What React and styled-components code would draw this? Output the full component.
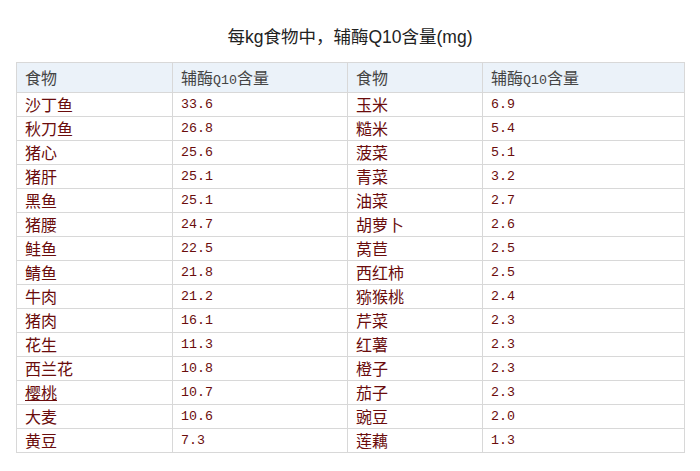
import React from "react";
import styled, { createGlobalStyle } from "styled-components";

const Global = createGlobalStyle`
  html, body { margin: 0; padding: 0; background: #fff; }
  body { font-family: "Noto Sans CJK SC", "Noto Sans", sans-serif; }
`;

const Page = styled.div`
  width: 700px;
  padding: 25px 16px 0 16px;
  box-sizing: border-box;
`;

const Title = styled.h1`
  margin: 0 0 13px 0;
  height: 24px;
  line-height: 24px;
  text-align: center;
  font-size: 17.5px;
  font-weight: normal;
  color: #222;
  font-family: "Liberation Sans", "Noto Sans CJK SC", sans-serif;
`;

const Table = styled.table`
  width: 668px;
  border-collapse: collapse;
  table-layout: fixed;
`;

const HeadCell = styled.th`
  height: 29px;
  padding: 0 0 0 8px;
  text-align: left;
  font-weight: normal;
  font-size: 16px;
  color: #444;
  background: #ebf2f9;
  border: 1px solid #d8d8d8;
  font-family: "Noto Sans CJK SC", sans-serif;
  line-height: 29px;
  white-space: nowrap;
  overflow: hidden;
`;

const Cell = styled.td`
  height: 23px;
  padding: 0 0 0 8px;
  border: 1px solid #d8d8d8;
  color: #6a0c0c;
  line-height: 23px;
  white-space: nowrap;
  overflow: hidden;
  font-size: ${(p) => (p.$num ? "13.3px" : "16px")};
  font-family: ${(p) =>
    p.$num
      ? `"Liberation Mono", "DejaVu Sans Mono", monospace`
      : `"Noto Sans CJK SC", sans-serif`};
`;

const Mono = styled.span`
  font-family: "Liberation Mono", monospace;
  font-size: 13.3px;
  line-height: 1;
`;

const Link = styled.a`
  color: #6a0c0c;
  text-decoration: underline;
`;

const rows = [
  ["沙丁鱼", "33.6", "玉米", "6.9"],
  ["秋刀鱼", "26.8", "糙米", "5.4"],
  ["猪心", "25.6", "菠菜", "5.1"],
  ["猪肝", "25.1", "青菜", "3.2"],
  ["黑鱼", "25.1", "油菜", "2.7"],
  ["猪腰", "24.7", "胡萝卜", "2.6"],
  ["鲑鱼", "22.5", "莴苣", "2.5"],
  ["鲭鱼", "21.8", "西红柿", "2.5"],
  ["牛肉", "21.2", "猕猴桃", "2.4"],
  ["猪肉", "16.1", "芹菜", "2.3"],
  ["花生", "11.3", "红薯", "2.3"],
  ["西兰花", "10.8", "橙子", "2.3"],
  ["樱桃", "10.7", "茄子", "2.3"],
  ["大麦", "10.6", "豌豆", "2.0"],
  ["黄豆", "7.3", "莲藕", "1.3"],
];

const Head = () => (
  <>
    <HeadCell>食物</HeadCell>
    <HeadCell>
      辅酶<Mono>Q10</Mono>含量
    </HeadCell>
  </>
);

export default function App() {
  return (
    <>
      <Global />
      <Page>
        <Title>每kg食物中，辅酶Q10含量(mg)</Title>
        <Table>
          <colgroup>
            <col style={{ width: 156 }} />
            <col style={{ width: 175 }} />
            <col style={{ width: 135 }} />
            <col style={{ width: 202 }} />
          </colgroup>
          <thead>
            <tr>
              <Head />
              <Head />
            </tr>
          </thead>
          <tbody>
            {rows.map((r) => (
              <tr key={r[0]}>
                <Cell>{r[0] === "樱桃" ? <Link>{r[0]}</Link> : r[0]}</Cell>
                <Cell $num>{r[1]}</Cell>
                <Cell>{r[2]}</Cell>
                <Cell $num>{r[3]}</Cell>
              </tr>
            ))}
          </tbody>
        </Table>
      </Page>
    </>
  );
}
